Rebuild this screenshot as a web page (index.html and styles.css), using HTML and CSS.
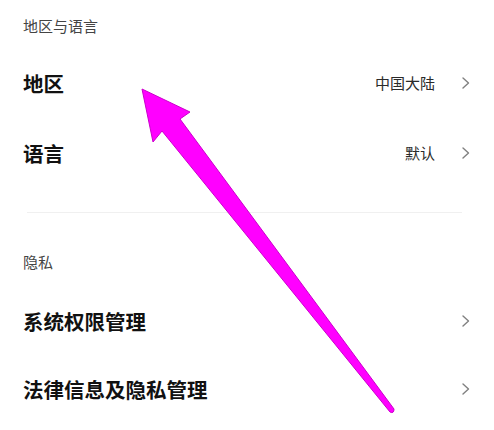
FILE: index.html
```html
<!DOCTYPE html>
<html lang="zh-CN">
<head>
<meta charset="utf-8">
<title>设置</title>
<link rel="stylesheet" href="styles.css">
</head>
<body>
<div class="page">
  <section class="group group-first">
    <div class="group-title">地区与语言</div>
    <div class="row row-tall">
      <span class="row-label">地区</span>
      <span class="row-right"><span class="row-value">中国大陆</span><svg class="chev" width="8" height="12" viewBox="0 0 8 12"><polyline points="1,1 6.5,6 1,11" fill="none" stroke="#808080" stroke-width="1.4" stroke-linecap="round" stroke-linejoin="round"/></svg></span>
    </div>
    <div class="row row-tall">
      <span class="row-label">语言</span>
      <span class="row-right"><span class="row-value">默认</span><svg class="chev" width="8" height="12" viewBox="0 0 8 12"><polyline points="1,1 6.5,6 1,11" fill="none" stroke="#808080" stroke-width="1.4" stroke-linecap="round" stroke-linejoin="round"/></svg></span>
    </div>
  </section>
  <div class="divider"></div>
  <section class="group group-second">
    <div class="group-title">隐私</div>
    <div class="row">
      <span class="row-label">系统权限管理</span>
      <span class="row-right"><svg class="chev" width="8" height="12" viewBox="0 0 8 12"><polyline points="1,1 6.5,6 1,11" fill="none" stroke="#808080" stroke-width="1.4" stroke-linecap="round" stroke-linejoin="round"/></svg></span>
    </div>
    <div class="row">
      <span class="row-label">法律信息及隐私管理</span>
      <span class="row-right"><svg class="chev" width="8" height="12" viewBox="0 0 8 12"><polyline points="1,1 6.5,6 1,11" fill="none" stroke="#808080" stroke-width="1.4" stroke-linecap="round" stroke-linejoin="round"/></svg></span>
    </div>
  </section>
  <svg class="annot" width="494" height="430" viewBox="0 0 494 430">
    <path d="M142 89 L190 112 L180 119 L394 409 Q394 414 390 412 L162 131 L153 142 Z" fill="#ff00ff" stroke="#cc00cc" stroke-width="1" stroke-linejoin="round"/>
  </svg>
</div>
</body>
</html>
```

FILE: styles.css
```css
* { box-sizing: border-box; }
html, body {
  margin: 0;
  padding: 0;
  background: #ffffff;
}
body {
  font-family: "Noto Sans CJK SC", "Noto Sans", sans-serif;
  color: #111111;
}
.page {
  position: relative;
  width: 494px;
  height: 430px;
  overflow: hidden;
}
.group-title {
  padding: 0 23px;
  font-size: 15px;
  line-height: 16px;
  color: #444444;
}
.group-first .group-title {
  padding-top: 18px;
  padding-bottom: 14px;
}
.group-second .group-title {
  padding-top: 41px;
  padding-bottom: 17px;
}
.row {
  display: flex;
  align-items: center;
  justify-content: space-between;
  height: 68px;
  padding: 0 24px 0 23px;
}
.row-tall {
  height: 70px;
}
.row-label {
  font-size: 20.5px;
  font-weight: 600;
  color: #111111;
  line-height: 24px;
}
.row-right {
  display: flex;
  align-items: center;
}
.row-value {
  font-size: 15px;
  color: #2a2a2a;
  margin-right: 27px;
  line-height: 18px;
}
.chev {
  display: block;
}
.divider {
  height: 1px;
  background: #f0f0f0;
  margin: 24px 32px 0 27px;
}
.annot {
  position: absolute;
  left: 0;
  top: 0;
  pointer-events: none;
}
```
